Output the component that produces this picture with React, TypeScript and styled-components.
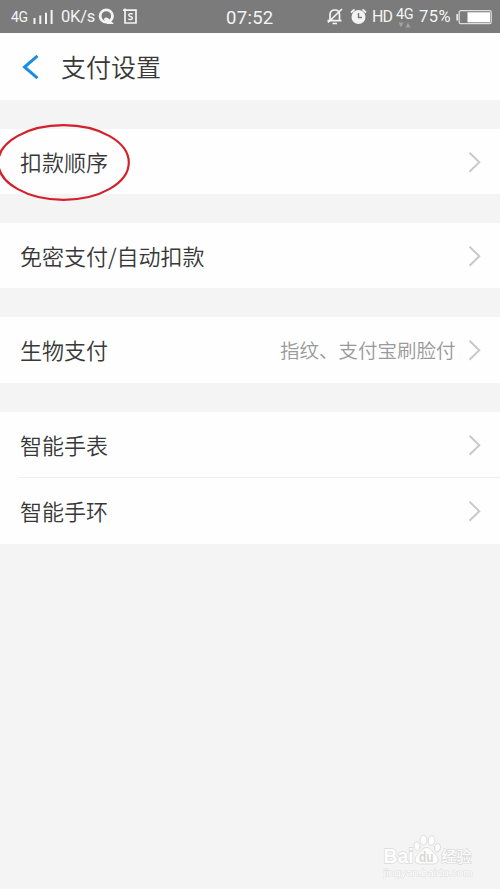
import React from "react";
import styled, { createGlobalStyle } from "styled-components";

const GlobalStyle = createGlobalStyle`
  * { box-sizing: border-box; }
  body { margin: 0; background: #f4f4f4; }
`;

const Screen = styled.div`
  position: relative;
  width: 500px;
  height: 889px;
  overflow: hidden;
  background: #f4f4f4;
  color: #383838;
  font-family: "Noto Sans CJK SC", sans-serif;
  font-weight: 350;
`;

const StatusBar = styled.header`
  display: grid;
  grid-template-columns: 226px 101px 173px;
  height: 33px;
  background: #7b7b7b;
  color: #f4f4f4;
  font-family: Roboto, sans-serif;
  font-weight: 400;
`;

const StatusGroup = styled.div<{ $left?: number }>`
  display: flex;
  align-items: center;
  height: 33px;
  padding-left: ${(p) => p.$left ?? 0}px;
`;

const StatusText = styled.span<{ $size: number; $width: number; $spacing?: number; $top?: number }>`
  flex: none;
  width: ${(p) => p.$width}px;
  margin-top: ${(p) => p.$top ?? 2}px;
  font-size: ${(p) => p.$size}px;
  line-height: 20px;
  letter-spacing: ${(p) => p.$spacing ?? 0}px;
  white-space: nowrap;
`;

const StatusIcon = styled.svg<{ $gap?: number }>`
  flex: none;
  display: block;
  margin-right: ${(p) => p.$gap ?? 0}px;
`;

const NetworkBadge = styled.div`
  display: flex;
  flex-direction: column;
  width: 23px;
  height: 18px;
`;

const NetworkLabel = styled.span`
  height: 14px;
  font-size: 14.5px;
  line-height: 14px;
  letter-spacing: -0.3px;
`;

const NetworkArrows = styled.svg`
  flex: none;
`;

const TitleBar = styled.div`
  display: flex;
  align-items: center;
  height: 67px;
  padding-left: 22px;
  background: #fefefe;
`;

const BackIcon = styled.svg`
  flex: none;
  margin-right: 22px;
`;

const Title = styled.h1`
  margin: 0 0 2px;
  font-size: 25px;
  font-weight: 350;
  line-height: 36px;
`;

const List = styled.main`
  display: flex;
  flex-direction: column;
  gap: 29px;
  padding-top: 28.5px;
`;

const Group = styled.section`
  background: #fefefe;
`;

const Row = styled.div`
  display: flex;
  align-items: center;
  height: 65.4px;
  padding: 1px 19px 0 20px;

  & + & {
    height: 66.6px;
    background: linear-gradient(#eeeeee, #eeeeee) 19px 0 / 481px 1px no-repeat;
  }
`;

const Label = styled.span`
  flex: 1;
  margin-bottom: 2px;
  font-size: 22px;
  line-height: 32px;
`;

const Value = styled.span`
  margin-right: 12.5px;
  color: #999;
  font-size: 19.5px;
  line-height: 28px;
`;

const Highlight = styled.svg`
  position: absolute;
  left: -5px;
  top: 120px;
`;

const Watermark = styled.div`
  position: absolute;
  left: 380px;
  top: 832px;
`;

function Chevron() {
  return (
    <svg width="13" height="22" viewBox="0 0 13 22" fill="none">
      <path d="M1.5 1.7 11.3 11.2 1.5 20.7" stroke="#c8c8c8" strokeWidth="1.9" />
    </svg>
  );
}

function SettingRow({ label, value }: { label: string; value?: string }) {
  return (
    <Row>
      <Label>{label}</Label>
      {value && <Value>{value}</Value>}
      <Chevron />
    </Row>
  );
}

function BaiduMark() {
  return (
    <svg width="100" height="50" viewBox="0 0 100 50">
      <g fill="#fdfdfd" stroke="#dadada" strokeWidth="1.4" fontFamily="Liberation Sans, sans-serif">
        <text x="3.5" y="30.5" fontSize="20" fontWeight="700" textLength="30" lengthAdjust="spacingAndGlyphs" paintOrder="stroke">Bai</text>
        <g strokeWidth="0.9">
          <ellipse cx="37" cy="14.2" rx="3" ry="4.2" transform="rotate(-12 37 14.2)" />
          <ellipse cx="43.5" cy="8" rx="3.4" ry="4.8" />
          <ellipse cx="51.5" cy="8.5" rx="3.4" ry="4.8" transform="rotate(8 51.5 8.5)" />
          <ellipse cx="57.5" cy="15.7" rx="3" ry="4.2" transform="rotate(12 57.5 15.7)" />
          <path d="M46.5 15.5c4.500 0 5.500 4 8.500 6.800 4.500 3.500 4.500 9.700-2 9.700H40.500c-6.500 0-7-6-2.500-9.700C41.500 19.500 42.500 15.500 46.500 15.500Z" />
        </g>
        <text x="61.5" y="29.5" fontFamily="Noto Sans CJK SC, sans-serif" fontSize="15" fontWeight="500" textLength="30" lengthAdjust="spacingAndGlyphs" paintOrder="stroke">经验</text>
        <text x="3.5" y="43.5" fontSize="9.5" textLength="89" lengthAdjust="spacingAndGlyphs" strokeWidth="0.9" stroke="#dedede" paintOrder="stroke">jingyan.baidu.com</text>
      </g>
      <text x="39" y="29.5" fill="#d8d8d8" fontFamily="Liberation Sans, sans-serif" fontSize="14" fontWeight="700" textLength="14.5" lengthAdjust="spacingAndGlyphs">du</text>
    </svg>
  );
}

export default function App() {
  return (
    <Screen>
      <GlobalStyle />
      <StatusBar>
        <StatusGroup $left={11}>
          <StatusText $size={14} $width={22} $spacing={-0.3} $top={0}>4G</StatusText>
          <StatusIcon width="20" height="15" viewBox="0 0 20 15" $gap={8}>
            <path d="M1.500 9v6M7.300 6.500V15M13 3.800V15M18.600 1v14" stroke="#f4f4f4" strokeWidth="2" />
          </StatusIcon>
          <StatusText $size={16.5} $width={37} $spacing={-0.2} $top={1.5}>0K/s</StatusText>
          <StatusIcon width="17" height="17" viewBox="0 0 17 17" $gap={7.5}>
            <circle cx="8.300" cy="8" r="6.200" fill="none" stroke="#f4f4f4" strokeWidth="2.800" />
            <path d="M6 11.500c0-2.500 3-2.700 5-.500l5 5h-7Z" fill="#f4f4f4" />
          </StatusIcon>
          <StatusIcon width="15" height="17" viewBox="0 0 15 17" fill="none" stroke="#f4f4f4">
            <path d="M2 .500v14.500h11V2.200H0" strokeWidth="1.700" />
            <path d="M9.800 6c-4.200-1.300-5.300 1.600-2.300 2.500 3.200.8 2.200 4-2.300 2.600" strokeWidth="1.400" />
          </StatusIcon>
        </StatusGroup>
        <StatusGroup>
          <StatusText $size={18.5} $width={50} $spacing={0.3}>07:52</StatusText>
        </StatusGroup>
        <StatusGroup>
          <StatusIcon width="16" height="17" viewBox="0 0 16 17" fill="none" stroke="#f4f4f4" strokeWidth="1.700" $gap={7}>
            <path d="M.500 12.700h14M3 12.500V7c0-3 2-5 5-5s4.500 2 4.500 5v5.500M5.500 15.500h4.500M1 14.500 15 1" />
          </StatusIcon>
          <StatusIcon width="17" height="17" viewBox="0 0 17 17" $gap={5}>
            <circle cx="8.500" cy="9" r="7" fill="#f4f4f4" />
            <path d="M1 4.500 4.500 1.300M12.500 1.300 16 4.500" stroke="#f4f4f4" strokeWidth="1.800" />
            <path d="M8.500 5v4.500H12" fill="none" stroke="#7b7b7b" strokeWidth="1.500" />
          </StatusIcon>
          <StatusText $size={16} $width={24} $spacing={-0.8} $top={1.5}>HD</StatusText>
          <NetworkBadge>
            <NetworkLabel>4G</NetworkLabel>
            <NetworkArrows width="16" height="6" viewBox="0 0 16 6">
              <path d="M2.500.500h5L5 5.500ZM9.500 5.500h5l-2.500-5Z" fill="#a2a2a2" />
            </NetworkArrows>
          </NetworkBadge>
          <StatusText $size={16.5} $width={37} $spacing={0.5} $top={1.5}>75%</StatusText>
          <StatusIcon width="37" height="16" viewBox="0 0 37 16">
            <rect x="3.200" y="1.700" width="32" height="13" rx="1.500" fill="none" stroke="#dedede" strokeWidth="1.300" />
            <rect x="11.500" y="3.300" width="22.500" height="10" fill="#fff" />
            <path d="M1.200 5v6.500" stroke="#e4e4e4" strokeWidth="1.800" />
          </StatusIcon>
        </StatusGroup>
      </StatusBar>
      <TitleBar>
        <BackIcon width="17" height="26" viewBox="0 0 17 26" fill="none">
          <path d="M15.500 1.800 2.500 13l13 11.200" stroke="#1c8ee2" strokeWidth="3" />
        </BackIcon>
        <Title>支付设置</Title>
      </TitleBar>
      <List>
        <Group><SettingRow label="扣款顺序" /></Group>
        <Group><SettingRow label="免密支付/自动扣款" /></Group>
        <Group><SettingRow label="生物支付" value="指纹、支付宝刷脸付" /></Group>
        <Group>
          <SettingRow label="智能手表" />
          <SettingRow label="智能手环" />
        </Group>
      </List>
      <Highlight width="140" height="86" viewBox="0 0 140 86" fill="none">
        <ellipse cx="68.500" cy="42.500" rx="65.300" ry="37.300" stroke="#d3202b" strokeWidth="2.200" />
      </Highlight>
      <Watermark><BaiduMark /></Watermark>
    </Screen>
  );
}
